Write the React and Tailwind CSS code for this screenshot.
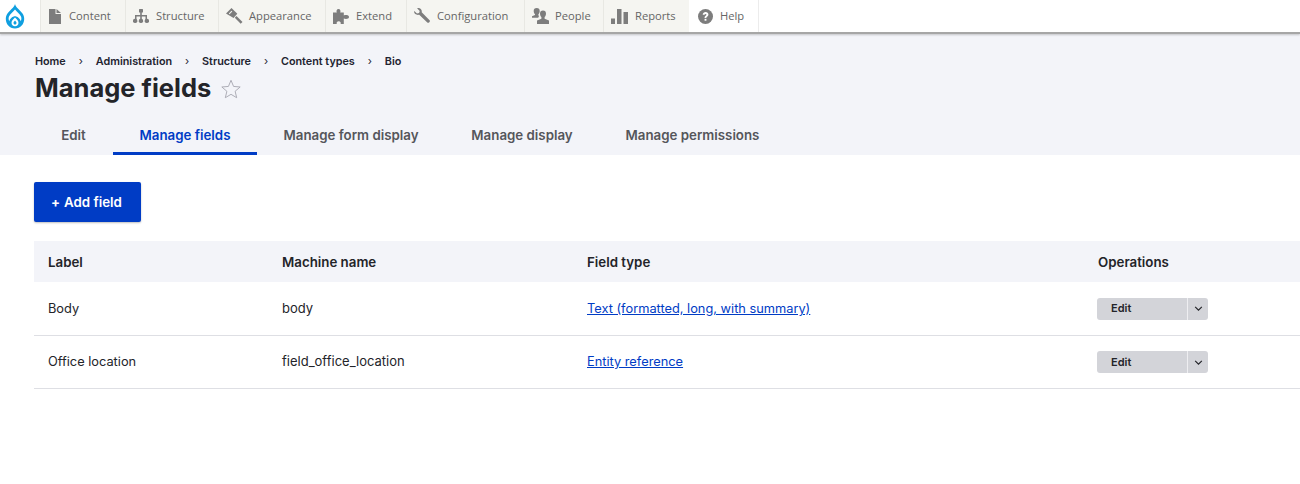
function Drop() {
  return (
    <svg viewBox="0 0 20 25" className="h-[25px] w-[20px]">
      <path d="M10 0C9.300 3.500 4.800 6 2.300 9.800C-1.500 15.800 2.300 24.500 10 24.500C17.700 24.500 21.500 15.800 17.700 9.800C15.200 6 10.700 3.500 10 0Z" fill="#0f9fe0" />
      <path d="M10 5.500C8.600 7.600 5.300 9.700 4 12.500C3.300 14.200 3.600 16 4.300 17.300C5 14.500 7.700 12.300 10 12.300C12.300 12.300 15 14.500 15.700 17.300C16.400 16 16.700 14.200 16 12.500C14.700 9.700 11.400 7.600 10 5.500Z" fill="#fff" />
      <path d="M10 13.500C8.300 15.200 6.500 16.800 6.500 18.700C6.500 20.800 8 22.300 10 22.300C12 22.300 13.500 20.800 13.500 18.700C13.500 16.800 11.700 15.200 10 13.500Z" fill="#fff" />
      <path d="M10 16.500C9.200 17.400 8.500 18 8.500 18.900C8.500 19.800 9.200 20.400 10 20.400C10.800 20.400 11.500 19.800 11.500 18.900C11.500 18 10.800 17.400 10 16.500Z" fill="#0f9fe0" />
    </svg>
  );
}

const Icons = {
  content: (
    <svg viewBox="0 0 12 15" className="h-[15px] w-[12px]" fill="#7d7d7d">
      <path d="M0 0h6.500v5H12v10H0z" />
      <path d="M7.500 0L12 4H7.500z" />
    </svg>
  ),
  structure: (
    <svg viewBox="0 0 16 14" className="h-[14px] w-[16px]" fill="#7d7d7d">
      <rect x="6" y="0" width="4" height="3.500" rx="0.500" />
      <rect x="7.200" y="3" width="1.600" height="7" />
      <path d="M2 6h12v4.500h-1.500V7.500h-9v3H2z" />
      <rect x="0" y="9.800" width="4.300" height="4.200" rx="1.800" />
      <rect x="5.800" y="9.800" width="4.300" height="4.200" rx="1.800" />
      <rect x="11.700" y="9.800" width="4.300" height="4.200" rx="1.800" />
    </svg>
  ),
  appearance: (
    <svg viewBox="0 0 17 16" className="h-[16px] w-[17px]" fill="#7d7d7d">
      <path d="M0 5.500L5.500 0l5.800 5.800-3.700 4.200z" />
      <path d="M8.800 9.800l1.700-1.700 6 6-1.800 1.700z" />
      <path d="M2.800 5.500l2.700-2.700.8.800-2.700 2.700z" fill="#f5f5f1" />
    </svg>
  ),
  extend: (
    <svg viewBox="0 0 16 15" className="h-[15px] w-[16px]" fill="#7d7d7d">
      <path d="M0 3.500h3.800C3 2 3.800 0 5.500 0S8 2 7.200 3.500h3.600v3c1.500-.8 5.200-.7 5.200 1.500s-3.700 2.300-5.200 1.500V15H7.600c.6-1.300-.2-2.800-1.900-2.800S3.200 13.700 3.800 15H0z" />
    </svg>
  ),
  configuration: (
    <svg viewBox="0 0 16 16" className="h-[16px] w-[16px]" fill="#7d7d7d">
      <path d="M.2 3L3 5.600l2.100-.6.600-2.100L3.100.3C5.600-.7 8.300 1.200 7.700 4.200l7.900 8c1 1.200-.9 3.300-2.300 2.400L5.200 6.800C2.200 7.400-.5 5.700.2 3z" />
    </svg>
  ),
  people: (
    <svg viewBox="0 0 17 16" className="h-[16px] w-[17px]" fill="#7d7d7d">
      <path d="M4.700 0C6.700 0 7.800 1.200 7.700 3.200c-.1 1.300-.6 2.400-1.300 3v1.400l.8.400c-.5.500-.8 1-1 1.800H0V8.200l3-1.100V6.200C2.300 5.600 1.800 4.500 1.700 3.200 1.600 1.200 2.700 0 4.700 0z" />
      <path d="M11 2.500c2 0 3.100 1.200 3 3.300-.1 1.400-.6 2.600-1.400 3.200v1.700l4.400 1.700V16H5v-3.600l4.400-1.700V9c-.8-.6-1.300-1.800-1.400-3.200-.1-2.100 1-3.300 3-3.300z" />
    </svg>
  ),
  reports: (
    <svg viewBox="0 0 17 15" className="h-[15px] w-[17px]" fill="#7d7d7d">
      <rect x="0" y="9.500" width="4" height="5.500" />
      <rect x="6" y="0" width="4.500" height="15" />
      <rect x="12.500" y="3" width="4.500" height="12" />
    </svg>
  ),
  help: (
    <svg viewBox="0 0 16 16" className="h-[15px] w-[15px]">
      <circle cx="8" cy="8" r="8" fill="#7d7d7d" />
      <path d="M5 6.100C5.200 4.300 6.500 3.300 8.100 3.300c1.800 0 3 1 3 2.600 0 1.200-.6 1.800-1.400 2.300-.6.400-.8.700-.8 1.400H7c0-1.200.3-1.900 1.100-2.500.5-.4.900-.6.900-1.100 0-.5-.4-.8-.9-.8-.6 0-1 .4-1.100 1z" fill="#fff" />
      <rect x="7" y="10.500" width="2" height="2" fill="#fff" />
    </svg>
  ),
};

const tools = [
  { label: "Content", icon: "content", w: "w-[85px]", gap: "gap-[8px] pl-[8px]" },
  { label: "Structure", icon: "structure", w: "w-[93px]", gap: "gap-[7px] pl-[7px]" },
  { label: "Appearance", icon: "appearance", w: "w-[107px]", gap: "gap-[6px] pl-[7px]" },
  { label: "Extend", icon: "extend", w: "w-[81px]", gap: "gap-[7px] pl-[7px]" },
  { label: "Configuration", icon: "configuration", w: "w-[118px]", gap: "gap-[7px] pl-[7px]" },
  { label: "People", icon: "people", w: "w-[79px]", gap: "gap-[6px] pl-[7px]" },
  { label: "Reports", icon: "reports", w: "w-[86px]", gap: "gap-[7px] pl-[7px]" },
];

function Toolbar() {
  return (
    <div className="relative z-10 flex h-[34px] items-stretch border-b-2 border-[#a6a6a6] bg-white font-['Open_Sans',sans-serif] text-[11.200px] text-[#666] shadow-[0_1px_2px_rgba(0,0,0,0.2)]">
      <div className="flex w-[40px] items-center justify-start pl-[5px]">
        <Drop />
      </div>
      {tools.map((t) => (
        <div key={t.label} className={`flex items-center border-l border-[#e8e8e3] bg-[#f5f5f1] ${t.w} ${t.gap}`}>
          {Icons[t.icon]}
          <span>{t.label}</span>
        </div>
      ))}
      <div className="flex w-[70px] items-center gap-[7px] border-r border-[#ececec] bg-white pl-[9px]">
        {Icons.help}
        <span>Help</span>
      </div>
    </div>
  );
}

const crumbs = ["Home", "Administration", "Structure", "Content types", "Bio"];

function Header() {
  return (
    <div className="h-[121px] bg-[#f3f4f9] pl-[35px] pt-[21px]">
      <div className="flex h-[13px] items-center text-[10.800px] font-semibold leading-[13px] text-[#222330]">
        {crumbs.map((c, i) => (
          <div key={c} className="flex items-center">
            {i > 0 && <span className="w-[30px] text-center font-normal">›</span>}
            <span>{c}</span>
          </div>
        ))}
      </div>
      <div className="mt-[2px] flex h-[36px] items-center gap-[9px]">
        <h1 className="text-[25.500px] font-bold leading-[36px] text-[#232429]">Manage fields</h1>
        <svg viewBox="0 0 24 24" className="mt-[2px] h-[22px] w-[22px]" fill="none" stroke="#a6a6b0" strokeWidth="1">
          <path d="M12 2.500l2.800 6.700 7.200.6-5.500 4.700 1.700 7-6.200-3.700-6.200 3.700 1.700-7L2 9.800l7.200-.6z" />
        </svg>
      </div>
      <div className="-ml-px mt-[12px] flex text-[13.300px] font-semibold leading-[18px] text-[#55565b]">
        <Tab w="w-[79px]">Edit</Tab>
        <Tab w="w-[144px]" active>Manage fields</Tab>
        <Tab w="w-[188px]">Manage form display</Tab>
        <Tab w="w-[154px]">Manage display</Tab>
        <Tab w="w-[187px]">Manage permissions</Tab>
      </div>
    </div>
  );
}

function Tab({ children, w, active }) {
  return (
    <div className={`flex h-[37px] items-start justify-center border-b-[3px] pt-[8px] ${w} ${active ? "border-[#003cc5] text-[#003cc5]" : "border-transparent"}`}>
      {children}
    </div>
  );
}

const rows = [
  { h: "h-[54px]", c: ["Body", "body", "Text (formatted, long, with summary)"] },
  { h: "h-[53px]", c: ["Office location", "field_office_location", "Entity reference"] },
];

const cols = "grid grid-cols-[234px_305px_511px_1fr] pl-[14px]";

function Table() {
  return (
    <div className="mt-[19px] text-[12.800px] text-[#232429]">
      <div className={`${cols} h-[41px] items-center bg-[#f3f4f9] pt-[2px] text-[13.300px] font-semibold`}>
        <div>Label</div>
        <div>Machine name</div>
        <div>Field type</div>
        <div>Operations</div>
      </div>
      {rows.map((r) => (
        <div key={r.c[0]} className={`${cols} ${r.h} items-center border-b border-[#dedfe4]`}>
          <div>{r.c[0]}</div>
          <div className="text-[13px]">{r.c[1]}</div>
          <div>
            <a className="text-[#003cc5] underline">{r.c[2]}</a>
          </div>
          <div>
            <div className="-ml-px flex h-[22px] w-[111px] rounded-[3px] bg-[#d3d4d9] text-[11px] font-semibold text-[#232429]">
              <div className="flex w-[90px] items-center justify-start pl-[14px]">Edit</div>
              <div className="flex flex-1 items-center justify-center border-l border-[#eeeef1]">
                <svg viewBox="0 0 10 6" className="h-[5px] w-[9px]" fill="none" stroke="#232429" strokeWidth="1.400">
                  <path d="M1 1l4 4 4-4" />
                </svg>
              </div>
            </div>
          </div>
        </div>
      ))}
    </div>
  );
}

export default function App() {
  return (
    <div className="h-[484px] overflow-hidden bg-white font-['Inter',sans-serif]">
      <Toolbar />
      <Header />
      <div className="pl-[34px] pt-[27px]">
        <button className="flex h-[40px] w-[107px] items-center justify-start rounded-[2px] bg-[#003cc5] pl-[17px] pt-[1px] text-[13.300px] font-semibold text-white shadow-[0_1px_2px_rgba(0,0,0,0.25)]">
          <span className="pr-[4px] font-bold">+</span>
          <span>Add field</span>
        </button>
        <Table />
      </div>
    </div>
  );
}
